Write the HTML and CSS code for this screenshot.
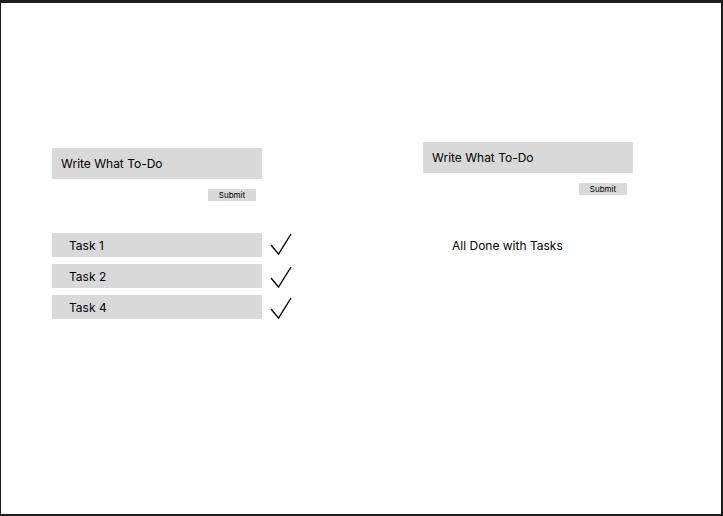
FILE: index.html
```html
<!DOCTYPE html>
<html>
<head>
<meta charset="utf-8">
<link rel="stylesheet" href="styles.css">
</head>
<body>
<div class="frame">
  <div class="columns">
    <section class="col col-left">
      <div class="input">Write What To-Do</div>
      <div class="submit-row"><button class="submit">Submit</button></div>
      <ul class="tasks">
        <li class="task">
          <div class="task-box">Task 1</div>
          <svg class="check c1" width="24" height="24" viewBox="0 0 24 24"><polyline points="1,12 8.5,21 21,1" fill="none" stroke="#000" stroke-width="1.4"/></svg>
        </li>
        <li class="task">
          <div class="task-box">Task 2</div>
          <svg class="check c2" width="24" height="24" viewBox="0 0 24 24"><polyline points="1,12 8.5,21 21,1" fill="none" stroke="#000" stroke-width="1.4"/></svg>
        </li>
        <li class="task">
          <div class="task-box">Task 4</div>
          <svg class="check c3" width="24" height="24" viewBox="0 0 24 24"><polyline points="1,12 8.5,21 21,1" fill="none" stroke="#000" stroke-width="1.4"/></svg>
        </li>
      </ul>
    </section>
    <section class="col col-right">
      <div class="input">Write What To-Do</div>
      <div class="submit-row"><button class="submit">Submit</button></div>
      <p class="done">All Done with Tasks</p>
    </section>
  </div>
</div>
</body>
</html>
```
FILE: styles.css
```css
* { box-sizing: border-box; }
html, body { margin: 0; padding: 0; }
body {
  width: 723px;
  height: 516px;
  font-family: Inter, "Noto Sans", sans-serif;
  color: #000;
  background: #1e1e1e;
}
.frame {
  width: 723px;
  height: 516px;
  border-style: solid;
  border-color: #1e1e1e;
  border-width: 3px 2px 2px 1px;
  background: #fff;
  padding: 139px 0 0 51px;
}
.columns {
  display: flex;
  align-items: flex-start;
  gap: 161px;
}
.col { width: 210px; display: flex; flex-direction: column; }
.col-left { margin-top: 6px; }
.input {
  width: 210px;
  height: 31px;
  background: #d9d9d9;
  font-size: 12px;
  line-height: 31px;
  padding-left: 9px;
}
.submit-row {
  display: flex;
  justify-content: flex-end;
  padding-right: 6px;
  margin-top: 10px;
}
.submit {
  width: 48px;
  height: 12px;
  border: 0;
  margin: 0;
  padding: 1px 0 0;
  background: #d9d9d9;
  font-family: Inter, "Noto Sans", sans-serif;
  font-size: 8px;
  line-height: 11px;
  color: #000;
  text-align: center;
}
.tasks {
  list-style: none;
  margin: 32px 0 0;
  padding: 0;
  display: flex;
  flex-direction: column;
  gap: 7px;
}
.task { display: flex; align-items: flex-start; gap: 8px; width: 260px; height: 24px; }
.task-box {
  flex: 0 0 210px;
  height: 24px;
  background: #d9d9d9;
  font-size: 12px;
  line-height: 24px;
  padding: 1px 0 0 17px;
}
.check { flex: none; display: block; overflow: visible; }
.c1 { margin-top: 0; }
.c2 { margin-top: 2px; }
.c3 { margin-top: 2px; }
.done {
  margin: 43px 0 0;
  padding-left: 29px;
  font-size: 12px;
  line-height: 16px;
}
```
